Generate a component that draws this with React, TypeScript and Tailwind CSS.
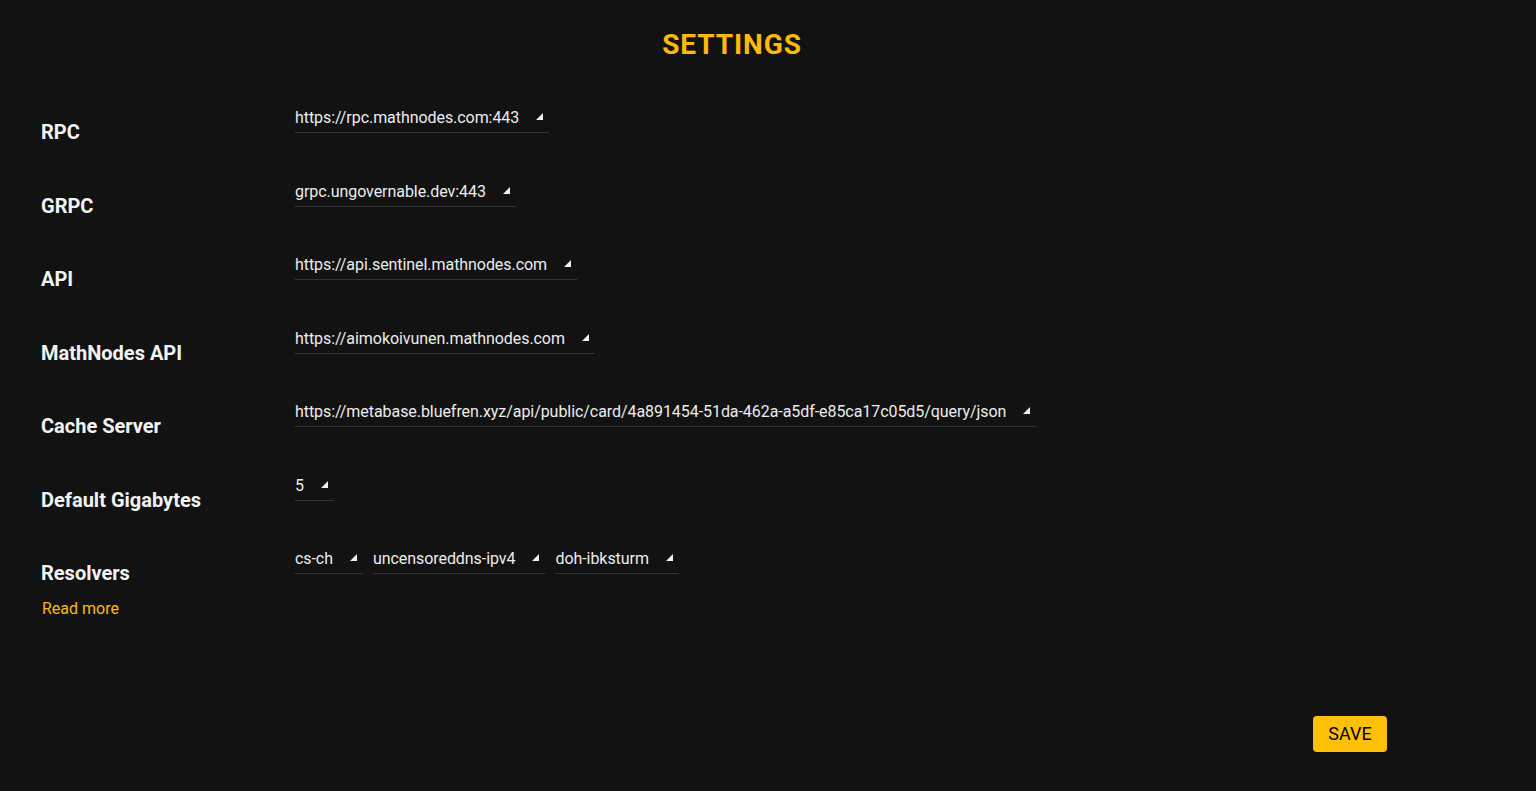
import React from 'react';

const rows = [
  { label: 'RPC', values: ['https://rpc.mathnodes.com:443'] },
  { label: 'GRPC', values: ['grpc.ungovernable.dev:443'] },
  { label: 'API', values: ['https://api.sentinel.mathnodes.com'] },
  { label: 'MathNodes API', values: ['https://aimokoivunen.mathnodes.com'] },
  {
    label: 'Cache Server',
    values: ['https://metabase.bluefren.xyz/api/public/card/4a891454-51da-462a-a5df-e85ca17c05d5/query/json'],
  },
  { label: 'Default Gigabytes', values: ['5'] },
  { label: 'Resolvers', values: ['cs-ch', 'uncensoreddns-ipv4', 'doh-ibksturm'] },
];

const Select = ({ value }: { value: string }) => (
  <div className="flex items-center pt-[5px] pb-[2px] pr-[6px] border-b border-[#353535] cursor-pointer">
    <span className="text-[16px] leading-6 tracking-[-0.06px] text-[#ececec] whitespace-nowrap">{value}</span>
    <svg className="ml-[17px] w-[7px] h-[7px] -mt-[3px]" viewBox="0 0 7 7">
      <polygon points="0,7 7,7 7,0" fill="#f0f0f0" />
    </svg>
  </div>
);

export default function App() {
  return (
    <div
      className="min-h-screen bg-[#121212] text-white"
      style={{ fontFamily: 'Roboto, "Liberation Sans", sans-serif' }}
    >
      <div className="pt-[27px] pr-[72px] text-center">
        <h1 className="text-[28px] leading-9 font-bold text-[#ffba08] tracking-[0.9px]">SETTINGS</h1>
      </div>

      <div className="mt-[38px] pl-[41px] flex flex-col">
        {rows.map((row) => (
          <div key={row.label} className="flex h-[73.5px]">
            <div className="w-[254px] pt-[17px]">
              <div className="text-[20px] leading-7 font-bold text-[#f2f2f2]">{row.label}</div>
              {row.label === 'Resolvers' && (
                <a href="#" className="block mt-[10px] ml-px text-[16px] leading-6 text-[#ffba08]">
                  Read more
                </a>
              )}
            </div>
            <div className="flex items-start gap-[10px]">
              {row.values.map((v) => (
                <Select key={v} value={v} />
              ))}
            </div>
          </div>
        ))}
      </div>

      <div className="mt-[100px] flex justify-end pr-[149px]">
        <button className="h-9 w-[74px] rounded bg-[#ffc107] text-[18px] text-black">SAVE</button>
      </div>
    </div>
  );
}
